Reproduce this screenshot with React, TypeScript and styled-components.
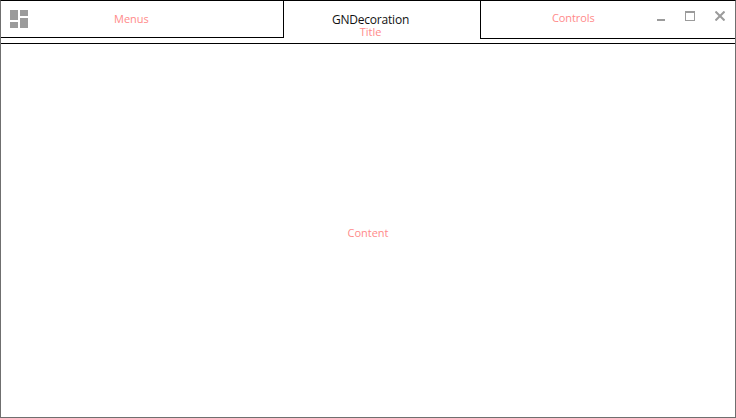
import * as React from 'react';
import styled, {createGlobalStyle} from 'styled-components';

const GlobalStyle = createGlobalStyle`
    html, body {
        margin: 0;
        padding: 0;
        background: #ffffff;
    }
    body {
        font-family: "Open Sans", "Noto Sans", "Liberation Sans", sans-serif;
    }
`
const Window = styled.div`
    box-sizing: border-box;
    width: 736px;
    height: 418px;
    display: flex;
    flex-direction: column;
    background: #ffffff;
    border: 1px solid #6f6f6f;
    border-top: 1px solid #000000;
`
const TitleBar = styled.header`
    box-sizing: border-box;
    height: 43px;
    display: grid;
    grid-template-columns: 283px 196px 1fr;
    border-bottom: 1px solid #000000;
    flex-shrink: 0;
`
const MenuArea = styled.div`
    box-sizing: border-box;
    height: 37px;
    display: flex;
    align-items: center;
    border-right: 1px solid #000000;
    border-bottom: 1px solid #000000;
    padding-left: 9px;
    position: relative;
`
const Placeholder = styled.span`
    font-size: 11px;
    line-height: 15px;
    color: #ff8a8a;
`
const MenuLabel = styled(Placeholder)`
    position: absolute;
    left: 113px;
    top: 10px;
`
const TitleArea = styled.div`
    display: flex;
    flex-direction: column;
    align-items: center;
    padding: 12px 23px 0 0;
`
const TitleText = styled.span`
    font-size: 12px;
    line-height: 13px;
    color: #111111;
    letter-spacing: -0.2px;
`
const TitleLabel = styled(Placeholder)`
    line-height: 11px;
`
const ControlArea = styled.div`
    box-sizing: border-box;
    height: 38px;
    display: flex;
    align-items: flex-start;
    border-left: 1px solid #000000;
    border-bottom: 1px solid #000000;
    padding: 9px 10px 0 71px;
`
const ControlLabel = styled(Placeholder)`
    letter-spacing: -0.1px;
`
const ControlButtons = styled.div`
    display: flex;
    gap: 20px;
    margin-left: 62px;
    padding-top: 1px;
`
const Content = styled.main`
    flex: 1;
    display: flex;
    align-items: center;
    justify-content: center;
    padding-top: 3px;
`

function LayoutIcon() {
    return (
        <svg width="18" height="18" viewBox="0 0 18 18" fill="#9b9b9b">
            <rect x="0" y="0" width="8" height="10" />
            <rect x="0" y="12" width="8" height="6" />
            <rect x="10" y="0" width="8" height="6" />
            <rect x="10" y="8" width="8" height="10" />
        </svg>
    );
}

function MinimizeIcon() {
    return (
        <svg width="8" height="10" viewBox="0 0 8 10" fill="#9b9b9b">
            <rect x="0" y="8" width="8" height="2" />
        </svg>
    );
}

function MaximizeIcon() {
    return (
        <svg width="10" height="10" viewBox="0 0 10 10" fill="none" stroke="#9b9b9b">
            <rect x="0.5" y="1" width="9" height="8.5" strokeWidth="1" />
            <rect x="0" y="0" width="10" height="2" fill="#9b9b9b" stroke="none" />
        </svg>
    );
}

function CloseIcon() {
    return (
        <svg width="10" height="10" viewBox="0 0 10 10" stroke="#9b9b9b" strokeWidth="2">
            <line x1="0.5" y1="0.5" x2="9.5" y2="9.5" />
            <line x1="9.5" y1="0.5" x2="0.5" y2="9.5" />
        </svg>
    );
}

export default function App() {
    return (
        <>
            <GlobalStyle />
            <Window>
                <TitleBar>
                    <MenuArea>
                        <LayoutIcon />
                        <MenuLabel>Menus</MenuLabel>
                    </MenuArea>
                    <TitleArea>
                        <TitleText>GNDecoration</TitleText>
                        <TitleLabel>Title</TitleLabel>
                    </TitleArea>
                    <ControlArea>
                        <ControlLabel>Controls</ControlLabel>
                        <ControlButtons>
                            <MinimizeIcon />
                            <MaximizeIcon />
                            <CloseIcon />
                        </ControlButtons>
                    </ControlArea>
                </TitleBar>
                <Content>
                    <Placeholder>Content</Placeholder>
                </Content>
            </Window>
        </>
    );
}
